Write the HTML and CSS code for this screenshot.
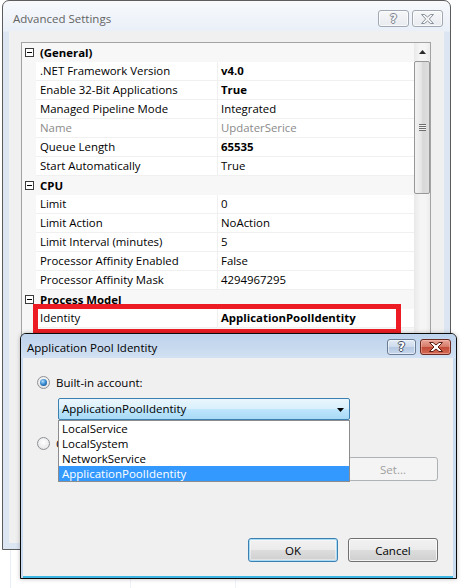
FILE: index.html
```html
<!DOCTYPE html>
<html>
<head>
<meta charset="utf-8">
<title>Advanced Settings</title>
<link rel="stylesheet" href="styles.css">
</head>
<body>
<div class="desktop">
  <div class="win outer">
    <div class="titlebar">
      <span class="title">Advanced Settings</span>
      <div class="caps">
        <div class="cap cap-help"><span class="qmark">?</span></div>
        <div class="cap cap-close">
          <svg width="13" height="10" viewBox="0 0 13 10"><polygon points="0.5,0.5 3.5,0.5 6.5,3 9.5,0.5 12.5,0.5 8.3,5 12.5,9.5 9.5,9.5 6.5,7 3.5,9.5 0.5,9.5 4.7,5" fill="#f4f4f4" stroke="#8a929c" stroke-width="1"/></svg>
        </div>
      </div>
    </div>
    <div class="client">
      <div class="grid">
        <div class="grid-body">
          <div class="cat"><span class="toggle"></span><span class="cat-name">(General)</span></div>
          <div class="prop"><span class="gut"></span><span class="name">.NET Framework Version</span><span class="val bold">v4.0</span></div>
          <div class="prop"><span class="gut"></span><span class="name">Enable 32-Bit Applications</span><span class="val bold">True</span></div>
          <div class="prop"><span class="gut"></span><span class="name">Managed Pipeline Mode</span><span class="val">Integrated</span></div>
          <div class="prop dim"><span class="gut"></span><span class="name">Name</span><span class="val">UpdaterSerice</span></div>
          <div class="prop"><span class="gut"></span><span class="name">Queue Length</span><span class="val bold">65535</span></div>
          <div class="prop"><span class="gut"></span><span class="name">Start Automatically</span><span class="val">True</span></div>
          <div class="cat"><span class="toggle"></span><span class="cat-name">CPU</span></div>
          <div class="prop"><span class="gut"></span><span class="name">Limit</span><span class="val">0</span></div>
          <div class="prop"><span class="gut"></span><span class="name">Limit Action</span><span class="val">NoAction</span></div>
          <div class="prop"><span class="gut"></span><span class="name">Limit Interval (minutes)</span><span class="val">5</span></div>
          <div class="prop"><span class="gut"></span><span class="name">Processor Affinity Enabled</span><span class="val">False</span></div>
          <div class="prop"><span class="gut"></span><span class="name">Processor Affinity Mask</span><span class="val">4294967295</span></div>
          <div class="cat"><span class="toggle"></span><span class="cat-name">Process Model</span></div>
          <div class="prop"><span class="gut"></span><span class="name">Identity</span><span class="val bold">ApplicationPoolIdentity</span></div>
        </div>
        <div class="scrollbar">
          <div class="sb-up"><svg width="7" height="4" viewBox="0 0 7 4"><polygon points="3.5,0 7,4 0,4" fill="#2b2b2b"/></svg></div>
          <div class="sb-thumb"><span class="grip"></span></div>
        </div>
      </div>
    </div>
  </div>

  <div class="mark"></div>

  <div class="win dlg">
    <div class="dlg-title">
      <span class="dlg-title-text">Application Pool Identity</span>
      <div class="dlg-caps">
        <div class="dcap dcap-help"><span class="qmark qmark-act">?</span></div>
        <div class="dcap dcap-close">
          <svg width="14" height="10" viewBox="0 0 14 10"><polygon points="0.5,0.5 4,0.5 7,3 10,0.5 13.5,0.5 9,5 13.5,9.5 10,9.5 7,7 4,9.5 0.5,9.5 5,5" fill="#ffffff" stroke="#5b1e14" stroke-width="1"/></svg>
        </div>
      </div>
    </div>
    <div class="dlg-client">
      <div class="opt"><span class="radio on"></span><span class="opt-label">Built-in account:</span></div>
      <div class="combo">
        <span class="combo-text">ApplicationPoolIdentity</span>
        <svg class="combo-arrow" width="7" height="4" viewBox="0 0 7 4"><polygon points="0,0 7,0 3.5,4" fill="#000"/></svg>
        <div class="droplist">
          <div class="item">LocalService</div>
          <div class="item">LocalSystem</div>
          <div class="item">NetworkService</div>
          <div class="item sel">ApplicationPoolIdentity</div>
        </div>
      </div>
      <div class="opt opt2"><span class="radio"></span><span class="opt-label">Custom account:</span></div>
      <div class="custom-row">
        <div class="textbox"></div>
        <div class="btn disabled">Set...</div>
      </div>
      <div class="actions">
        <div class="btn default">OK</div>
        <div class="btn">Cancel</div>
      </div>
    </div>
  </div>
</div>
</body>
</html>
```

FILE: styles.css
```css
html, body {
  margin: 0;
  padding: 0;
}

body {
  width: 465px;
  height: 588px;
  overflow: hidden;
  background: #ffffff;
  font-family: "Open Sans", "Noto Sans", sans-serif;
  font-size: 11.4px;
  color: #000;
}

.desktop {
  position: relative;
  width: 465px;
  height: 588px;
  background:
    linear-gradient(to right, transparent 10px, #e8eff9 10px, #e8eff9 11px, transparent 11px,
      transparent 130px, #eef3fa 130px, #eef3fa 131px, transparent 131px,
      transparent 235px, #eef3fa 235px, #eef3fa 236px, transparent 236px);
}

/* ---------- windows ---------- */
.win {
  position: absolute;
  box-sizing: border-box;
  display: flex;
  flex-direction: column;
}

.outer {
  left: 2px;
  top: 0;
  width: 449px;
  height: 550px;
  border: 1px solid #5c5c5c;
  border-radius: 7px 7px 0 0;
  padding: 0 6px 6px 6px;
  background: linear-gradient(#f7f9fc 0px, #eaf0f8 30px, #dce6f3 31px, #dce6f3 100%);
}

.titlebar {
  height: 30px;
  flex: none;
  display: flex;
  align-items: flex-start;
}

.title {
  margin: 9px 0 0 4px;
  color: #636363;
  font-size: 11.5px;
  line-height: 17px;
}

.caps {
  margin: 9px 1px 0 auto;
  display: flex;
  gap: 3px;
}

.cap {
  box-sizing: border-box;
  height: 17px;
  border: 1px solid #a2a9b2;
  border-radius: 3px;
  background: linear-gradient(#f6f7f9, #e8ebef);
  box-shadow: inset 0 0 0 1px rgba(255, 255, 255, 0.7);
  display: flex;
  align-items: center;
  justify-content: center;
}

.cap-help { width: 31px; }
.cap-close { width: 31px; }

.qmark {
  font-family: "DejaVu Sans", sans-serif;
  font-weight: bold;
  font-size: 12px;
  line-height: 12px;
  color: #f6f6f6;
  text-shadow: 1px 0 0 #7d8590, -1px 0 0 #7d8590, 0 1px 0 #7d8590, 0 -1px 0 #7d8590;
}

.client {
  flex: 1;
  background: #f0f0f0;
  padding: 11px 0 0 12px;
  overflow: hidden;
}

/* ---------- property grid ---------- */
.grid {
  width: 410px;
  height: 480px;
  box-sizing: border-box;
  border: 1px solid #a3a3a3;
  display: flex;
  background: #f7f7f7;
}

.grid-body {
  width: 392px;
  flex: none;
  background: #f7f7f7;
}

.cat, .prop {
  height: 19px;
  display: flex;
  line-height: 18px;
}

.cat {
  align-items: center;
  font-weight: bold;
}

.toggle {
  position: relative;
  width: 9px;
  height: 9px;
  box-sizing: border-box;
  border: 1px solid #3c3c3c;
  margin-left: 3px;
  background: #fff;
  flex: none;
}

.toggle::after {
  content: "";
  position: absolute;
  left: 1px;
  top: 3px;
  width: 5px;
  height: 1px;
  background: #000;
}

.cat-name {
  margin-left: 6px;
  line-height: 18px;
}

.gut {
  width: 14px;
  flex: none;
}

.name {
  width: 182px;
  flex: none;
  box-sizing: border-box;
  padding-left: 4px;
  background: #fff;
  border-right: 1px solid #f0f0f0;
  border-bottom: 1px solid #f0f0f0;
  white-space: nowrap;
}

.val {
  flex: 1;
  padding-left: 3px;
  background: #fff;
  border-bottom: 1px solid #f0f0f0;
  white-space: nowrap;
}

.bold { font-weight: bold; }

.dim .name, .dim .val { color: #8a8a8a; }

.scrollbar {
  width: 16px;
  flex: none;
  background: linear-gradient(to right, #e9e9e9, #f5f5f5 40%, #f5f5f5 70%, #ececec);
  display: flex;
  flex-direction: column;
}

.sb-up {
  height: 18px;
  display: flex;
  align-items: center;
  justify-content: center;
  padding-left: 1px;
  box-sizing: border-box;
}

.sb-thumb {
  height: 133px;
  box-sizing: border-box;
  border: 1px solid #979797;
  border-radius: 2px;
  background: linear-gradient(to right, #f2f2f2, #e6e6e6 45%, #d8d8d8 55%, #dedede);
  display: flex;
  align-items: center;
  justify-content: center;
}

.grip {
  width: 7px;
  height: 7px;
  background: repeating-linear-gradient(#6e6e6e 0, #6e6e6e 1px, #f2f2f2 1px, #f2f2f2 2px);
}

/* ---------- annotation ---------- */
.mark {
  position: absolute;
  left: 33px;
  top: 304px;
  width: 368px;
  height: 30px;
  box-sizing: border-box;
  border: 5px solid #ed1c24;
}

/* ---------- dialog ---------- */
.dlg {
  left: 20px;
  top: 333px;
  width: 437px;
  height: 246px;
  border: 1px solid #0b0b0b;
  border-radius: 6px 6px 0 0;
  padding: 0 3px 0 2px;
  background: #c9dbef;
  box-shadow: 0 0 4px rgba(0, 0, 0, 0.25);
}

.dlg-title {
  height: 24px;
  flex: none;
  display: flex;
  align-items: flex-start;
  margin: 0 -3px 0 -2px;
  padding: 0 3px 0 2px;
  border-radius: 5px 5px 0 0;
  background: linear-gradient(#bed3ec, #c8daef 60%, #d3e2f3);
}

.dlg-title-text {
  margin: 5px 0 0 4px;
  font-size: 11.5px;
  line-height: 17px;
  color: #000;
}

.dlg-caps {
  margin: 5px 2px 0 auto;
  display: flex;
  gap: 4px;
}

.dcap {
  box-sizing: border-box;
  height: 16px;
  border-radius: 3px;
  display: flex;
  align-items: center;
  justify-content: center;
}

.dcap-help {
  width: 29px;
  border: 1px solid #6b7d95;
  background: linear-gradient(#e3ecf7, #ccdaec 50%, #b5c8e1 51%, #c6d7ec);
  box-shadow: inset 0 0 0 1px rgba(255, 255, 255, 0.5);
}

.dcap-close {
  width: 31px;
  border: 1px solid #6a2a1f;
  background: linear-gradient(#e8a799, #d67968 50%, #c24a36 51%, #d36b57);
  box-shadow: inset 0 0 0 1px rgba(255, 200, 190, 0.45);
}

.qmark-act {
  color: #fff;
  text-shadow: 1px 0 0 #3f4d60, -1px 0 0 #3f4d60, 0 1px 0 #3f4d60, 0 -1px 0 #3f4d60;
}

.dlg-client {
  flex: 1;
  background: #f0f0f0;
  border-bottom: 2px solid #3db6e4;
  padding: 18px 15px 14px 14px;
  display: flex;
  flex-direction: column;
  position: relative;
}

.opt {
  height: 13px;
  display: flex;
  align-items: center;
}

.opt2 { margin-top: 17px; }

.radio {
  position: relative;
  width: 13px;
  height: 13px;
  box-sizing: border-box;
  border-radius: 50%;
  border: 1px solid #8f9194;
  background: radial-gradient(circle at 50% 40%, #ffffff, #ececec 60%, #d4d4d4);
  flex: none;
}

.radio.on::after {
  content: "";
  position: absolute;
  left: 2px;
  top: 2px;
  width: 7px;
  height: 7px;
  border-radius: 50%;
  background: radial-gradient(circle at 40% 35%, #b8e2fb, #3b8ed3 45%, #1a5a96 80%, #174a7a);
}

.opt-label {
  margin-left: 6px;
  line-height: 13px;
  font-size: 11.5px;
}

.combo {
  position: relative;
  margin: 9px 0 0 21px;
  width: 292px;
  height: 22px;
  box-sizing: border-box;
  border: 1px solid #3c7fb1;
  border-radius: 2px;
  background: linear-gradient(#eaf6fd 0%, #d9f0fc 48%, #bee6fd 52%, #a7d9f5 100%);
  display: flex;
  align-items: center;
  padding-left: 3px;
  flex: none;
}

.combo-text {
  line-height: 18px;
  font-size: 11.5px;
}

.combo-arrow {
  margin: 2px 5px 0 auto;
}

.droplist {
  position: absolute;
  left: -1px;
  top: calc(100% + 1px);
  width: 292px;
  height: 62px;
  box-sizing: border-box;
  border: 1px solid #8c8c8c;
  background: #fff;
  z-index: 2;
}

.item {
  height: 15px;
  line-height: 15px;
  padding-left: 3px;
  font-size: 11.5px;
  white-space: nowrap;
}

.item.sel {
  background: #3399ff;
  color: #fff;
}

.custom-row {
  margin-top: 7px;
  height: 24px;
  display: flex;
  align-items: center;
}

.textbox {
  margin-left: 21px;
  width: 278px;
  height: 21px;
  box-sizing: border-box;
  border: 1px solid #c5c5c5;
  background: #f4f4f4;
}

.btn {
  width: 90px;
  height: 24px;
  box-sizing: border-box;
  border: 1px solid #707070;
  border-radius: 3px;
  background: linear-gradient(#f2f2f2 0%, #ebebeb 49%, #dddddd 50%, #cfcfcf 100%);
  box-shadow: inset 0 0 0 1px rgba(255, 255, 255, 0.75);
  display: flex;
  align-items: center;
  justify-content: center;
  font-size: 11.5px;
}

.custom-row .btn { margin-left: auto; }

.btn.disabled {
  border-color: #adb2b5;
  background: #f4f4f4;
  box-shadow: none;
  color: #a0a0a0;
}

.btn.default {
  border-color: #3c7fb1;
  box-shadow: inset 0 0 0 1px #a8dcf6, inset 0 0 0 2px rgba(255, 255, 255, 0.4);
}

.actions {
  margin-top: auto;
  display: flex;
  justify-content: flex-end;
  gap: 10px;
}
```
